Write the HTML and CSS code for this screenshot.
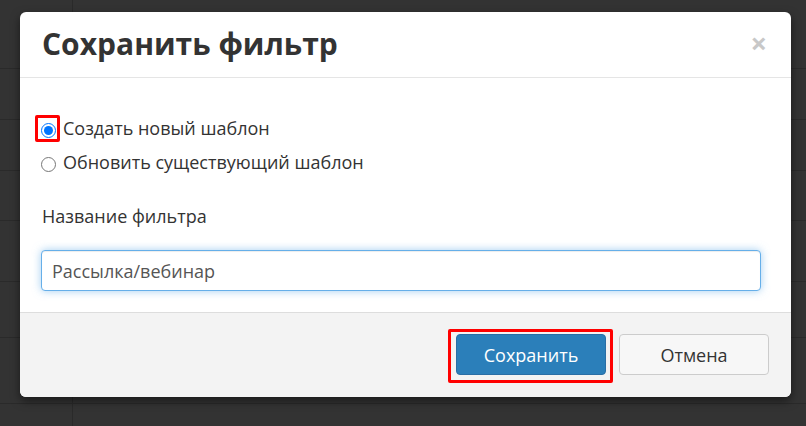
FILE: index.html
```html
<!DOCTYPE html>
<html lang="ru">
<head>
<meta charset="utf-8">
<link rel="stylesheet" href="styles.css">
</head>
<body>
<div class="modal">
  <div class="modal-header">
    <h4 class="modal-title">Сохранить фильтр</h4>
    <span class="close">×</span>
  </div>
  <div class="modal-body">
    <label class="radio-row">
      <span class="radio-wrap marked"><input type="radio" name="mode" checked></span>
      <span>Создать новый шаблон</span>
    </label>
    <label class="radio-row">
      <span class="radio-wrap"><input type="radio" name="mode"></span>
      <span>Обновить существующий шаблон</span>
    </label>
    <div class="field-label">Название фильтра</div>
    <input class="text-input" type="text" value="Рассылка/вебинар">
  </div>
  <div class="modal-footer">
    <button class="btn btn-primary marked-btn">Сохранить</button>
    <button class="btn btn-default">Отмена</button>
  </div>
</div>
</body>
</html>
```

FILE: styles.css
```css
html, body {
  margin: 0;
  height: 100%;
}
body {
  background-color: #333333;
  background-image:
    linear-gradient(to right, transparent 72px, #2a2a2a 72px, #2a2a2a 73px, transparent 73px),
    linear-gradient(to bottom, transparent 68px, #2a2a2a 68px, #2a2a2a 69px, transparent 69px),
    linear-gradient(to bottom, transparent 119px, #2a2a2a 119px, #2a2a2a 120px, transparent 120px),
    linear-gradient(to bottom, transparent 170px, #2a2a2a 170px, #2a2a2a 171px, transparent 171px),
    linear-gradient(to bottom, transparent 220px, #2a2a2a 220px, #2a2a2a 221px, transparent 221px),
    linear-gradient(to bottom, transparent 281px, #2a2a2a 281px, #2a2a2a 282px, transparent 282px),
    linear-gradient(to bottom, transparent 337px, #2a2a2a 337px, #2a2a2a 338px, transparent 338px),
    linear-gradient(to bottom, transparent 403px, #2a2a2a 403px, #2a2a2a 404px, transparent 404px);
  font-family: "Open Sans", "Noto Sans", sans-serif;
  color: #333;
  padding: 12px 0 0 20px;
  box-sizing: border-box;
}
.modal {
  width: 771px;
  height: 385px;
  background: #fff;
  border-radius: 6px;
  box-shadow: 0 4px 10px rgba(0,0,0,0.5);
  overflow: hidden;
  display: flex;
  flex-direction: column;
}
.modal-header {
  height: 66px;
  box-sizing: border-box;
  border-bottom: 1px solid #e5e5e5;
  display: flex;
  align-items: center;
  justify-content: space-between;
  padding: 0 24px 0 22px;
}
.modal-title {
  margin: 0;
  font-size: 30px;
  font-weight: 700;
  color: #333;
  line-height: 1;
  padding-bottom: 2px;
}
.close {
  font-size: 29px;
  font-weight: 700;
  color: #c8c8c8;
  line-height: 1;
  padding-bottom: 4px;
}
.modal-body {
  flex: 1;
  padding: 33px 30px 0 21px;
  box-sizing: border-box;
}
.radio-row {
  display: flex;
  align-items: center;
  height: 34px;
  font-size: 18px;
  color: #333;
  gap: 7px;
}
.radio-wrap {
  position: relative;
  display: flex;
  width: 15px;
  height: 15px;
  margin-top: 4px;
}
.radio-wrap input {
  margin: 0;
  width: 15px;
  height: 15px;
}
.radio-wrap.marked::after {
  content: "";
  position: absolute;
  left: -6px;
  top: -8px;
  width: 25px;
  height: 27px;
  box-sizing: border-box;
  border: 3px solid #ff0000;
  border-radius: 2px;
}
.field-label {
  margin-top: 25px;
  font-size: 18px;
  color: #333;
  padding-left: 1px;
}
.text-input {
  display: block;
  margin-top: 22px;
  width: 720px;
  height: 41px;
  box-sizing: border-box;
  border: 1px solid #66afe9;
  border-radius: 4px;
  box-shadow: inset 0 1px 1px rgba(0,0,0,0.075), 0 0 8px rgba(102,175,233,0.6);
  font-family: "Open Sans", "Noto Sans", sans-serif;
  font-size: 18px;
  color: #555;
  padding: 0 10px;
  outline: none;
}
.modal-footer {
  height: 85px;
  box-sizing: border-box;
  border-top: 1px solid #dddddd;
  background: #f3f3f3;
  display: flex;
  justify-content: flex-end;
  align-items: flex-start;
  padding: 21px 22px 0 0;
  gap: 13px;
}
.btn {
  height: 41px;
  width: 150px;
  border-radius: 4px;
  font-family: "Open Sans", "Noto Sans", sans-serif;
  font-size: 18px;
  box-sizing: border-box;
  cursor: pointer;
}
.btn-primary {
  background: #2b7fba;
  border: 1px solid #2a6ea5;
  color: #fff;
}
.btn-default {
  background: #f7f7f7;
  border: 1px solid #cccccc;
  color: #333;
}
.marked-btn {
  position: relative;
}
.marked-btn::after {
  content: "";
  position: absolute;
  left: -9px;
  top: -6px;
  right: -8px;
  bottom: -9px;
  border: 3px solid #ff0000;
  border-radius: 2px;
}
```
